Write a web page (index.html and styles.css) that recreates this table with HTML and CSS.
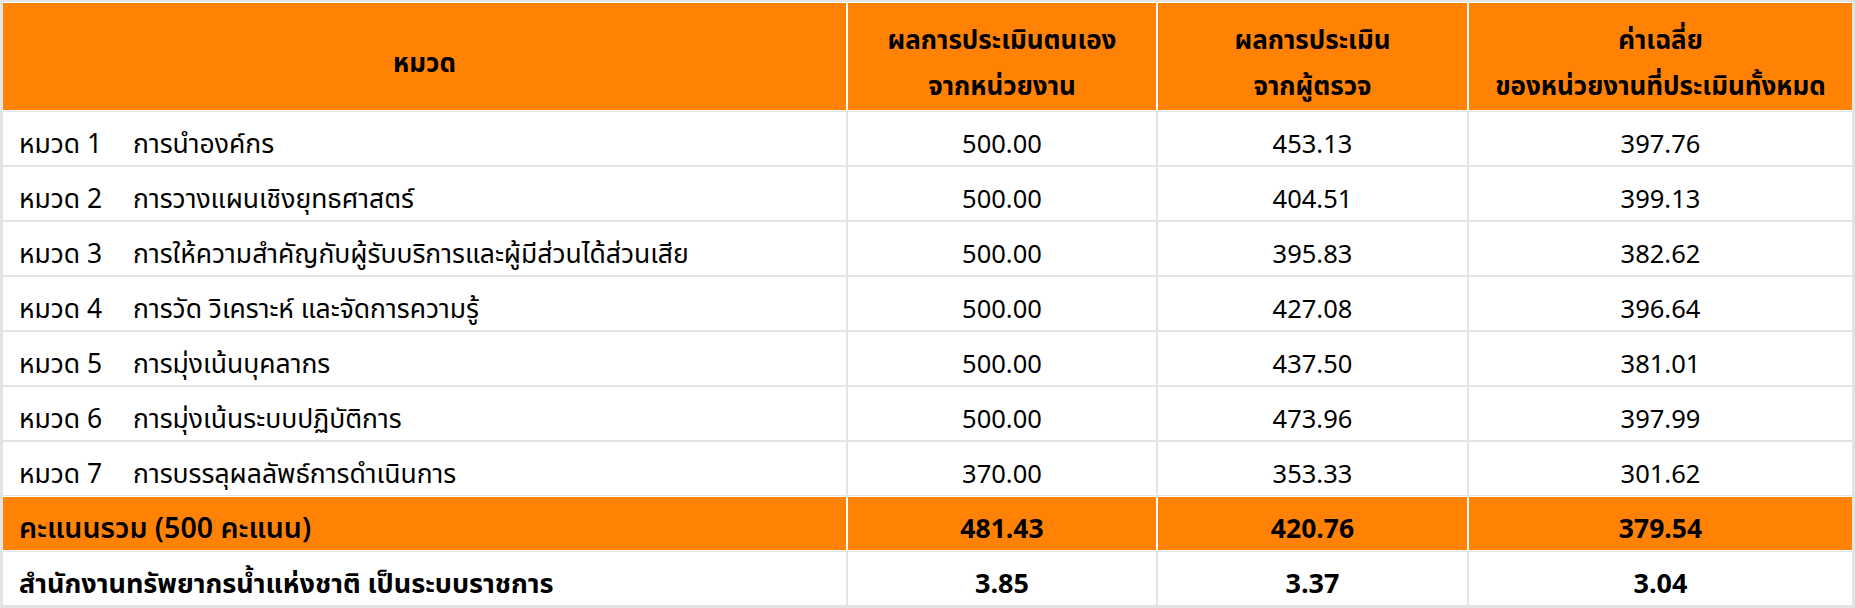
FILE: index.html
```html
<!DOCTYPE html>
<html lang="th">
<head>
<meta charset="utf-8">
<title>ผลการประเมิน</title>
<link rel="stylesheet" href="styles.css">
</head>
<body>
<table class="score">
  <colgroup>
    <col class="c-cat">
    <col class="c-num">
    <col class="c-num2">
    <col class="c-avg">
  </colgroup>
  <thead>
    <tr>
      <th class="hd">หมวด</th>
      <th class="hd">ผลการประเมินตนเอง<br>จากหน่วยงาน</th>
      <th class="hd">ผลการประเมิน<br>จากผู้ตรวจ</th>
      <th class="hd">ค่าเฉลี่ย<br>ของหน่วยงานที่ประเมินทั้งหมด</th>
    </tr>
  </thead>
  <tbody>
    <tr><td class="cat"><span class="lbl">หมวด 1</span>การนำองค์กร</td><td class="num">500.00</td><td class="num">453.13</td><td class="num">397.76</td></tr>
    <tr><td class="cat"><span class="lbl">หมวด 2</span>การวางแผนเชิงยุทธศาสตร์</td><td class="num">500.00</td><td class="num">404.51</td><td class="num">399.13</td></tr>
    <tr><td class="cat"><span class="lbl">หมวด 3</span>การให้ความสำคัญกับผู้รับบริการและผู้มีส่วนได้ส่วนเสีย</td><td class="num">500.00</td><td class="num">395.83</td><td class="num">382.62</td></tr>
    <tr><td class="cat"><span class="lbl">หมวด 4</span>การวัด วิเคราะห์ และจัดการความรู้</td><td class="num">500.00</td><td class="num">427.08</td><td class="num">396.64</td></tr>
    <tr><td class="cat"><span class="lbl">หมวด 5</span>การมุ่งเน้นบุคลากร</td><td class="num">500.00</td><td class="num">437.50</td><td class="num">381.01</td></tr>
    <tr><td class="cat"><span class="lbl">หมวด 6</span>การมุ่งเน้นระบบปฏิบัติการ</td><td class="num">500.00</td><td class="num">473.96</td><td class="num">397.99</td></tr>
    <tr><td class="cat"><span class="lbl">หมวด 7</span>การบรรลุผลลัพธ์การดำเนินการ</td><td class="num">370.00</td><td class="num">353.33</td><td class="num">301.62</td></tr>
    <tr class="total"><td class="cat">คะแนนรวม (500 คะแนน)</td><td class="num">481.43</td><td class="num">420.76</td><td class="num">379.54</td></tr>
    <tr class="grade"><td class="cat">สำนักงานทรัพยากรน้ำแห่งชาติ เป็นระบบราชการ</td><td class="num">3.85</td><td class="num">3.37</td><td class="num">3.04</td></tr>
  </tbody>
</table>
</body>
</html>
```

FILE: styles.css
```css
html, body {
  margin: 0;
  padding: 0;
  background: #ffffff;
}
body {
  font-family: "Noto Sans Thai", "Noto Sans", "Tahoma", sans-serif;
  color: #000;
}
.score {
  width: 1855px;
  border-collapse: separate;
  border-spacing: 0;
  border: 2px solid #e4e4e4;
  table-layout: fixed;
  font-size: 25.5px;
}
.c-cat { width: 845px; }
.c-num { width: 310px; }
.c-num2 { width: 311px; }
.c-avg { width: auto; }

.score td {
  border: 1px solid #e4e4e4;
  height: 55px;
  box-sizing: border-box;
  padding: 12px 16px 0;
  line-height: 30px;
  vertical-align: middle;
}
.score td.cat { font-size: 26.5px; }
.score th.hd {
  background: #ff8205;
  border: 1px solid #ffffff;
  height: 109px;
  box-sizing: border-box;
  padding: 14px 10px 0;
  font-size: 26px;
  font-weight: bold;
  line-height: 46px;
  text-align: center;
  vertical-align: middle;
}
.score thead th:first-child { border-left-color: #e4e4e4; }
.score thead th { border-top-color: #e4e4e4; }
.score thead th:last-child { border-right-color: #e4e4e4; }

.num { text-align: center; }
.lbl {
  display: inline-block;
  width: 114px;
}
.total td {
  background: #ff8205;
  border-color: #ffffff;
  font-weight: bold;
  font-size: 26.5px;
}
.score .total td.cat {
  font-size: 28.5px;
  font-weight: 600;
}
.total td:first-child { border-left-color: #e4e4e4; }
.total td:last-child { border-right-color: #e4e4e4; }
.score .grade td {
  font-weight: bold;
  font-size: 27px;
}
```
